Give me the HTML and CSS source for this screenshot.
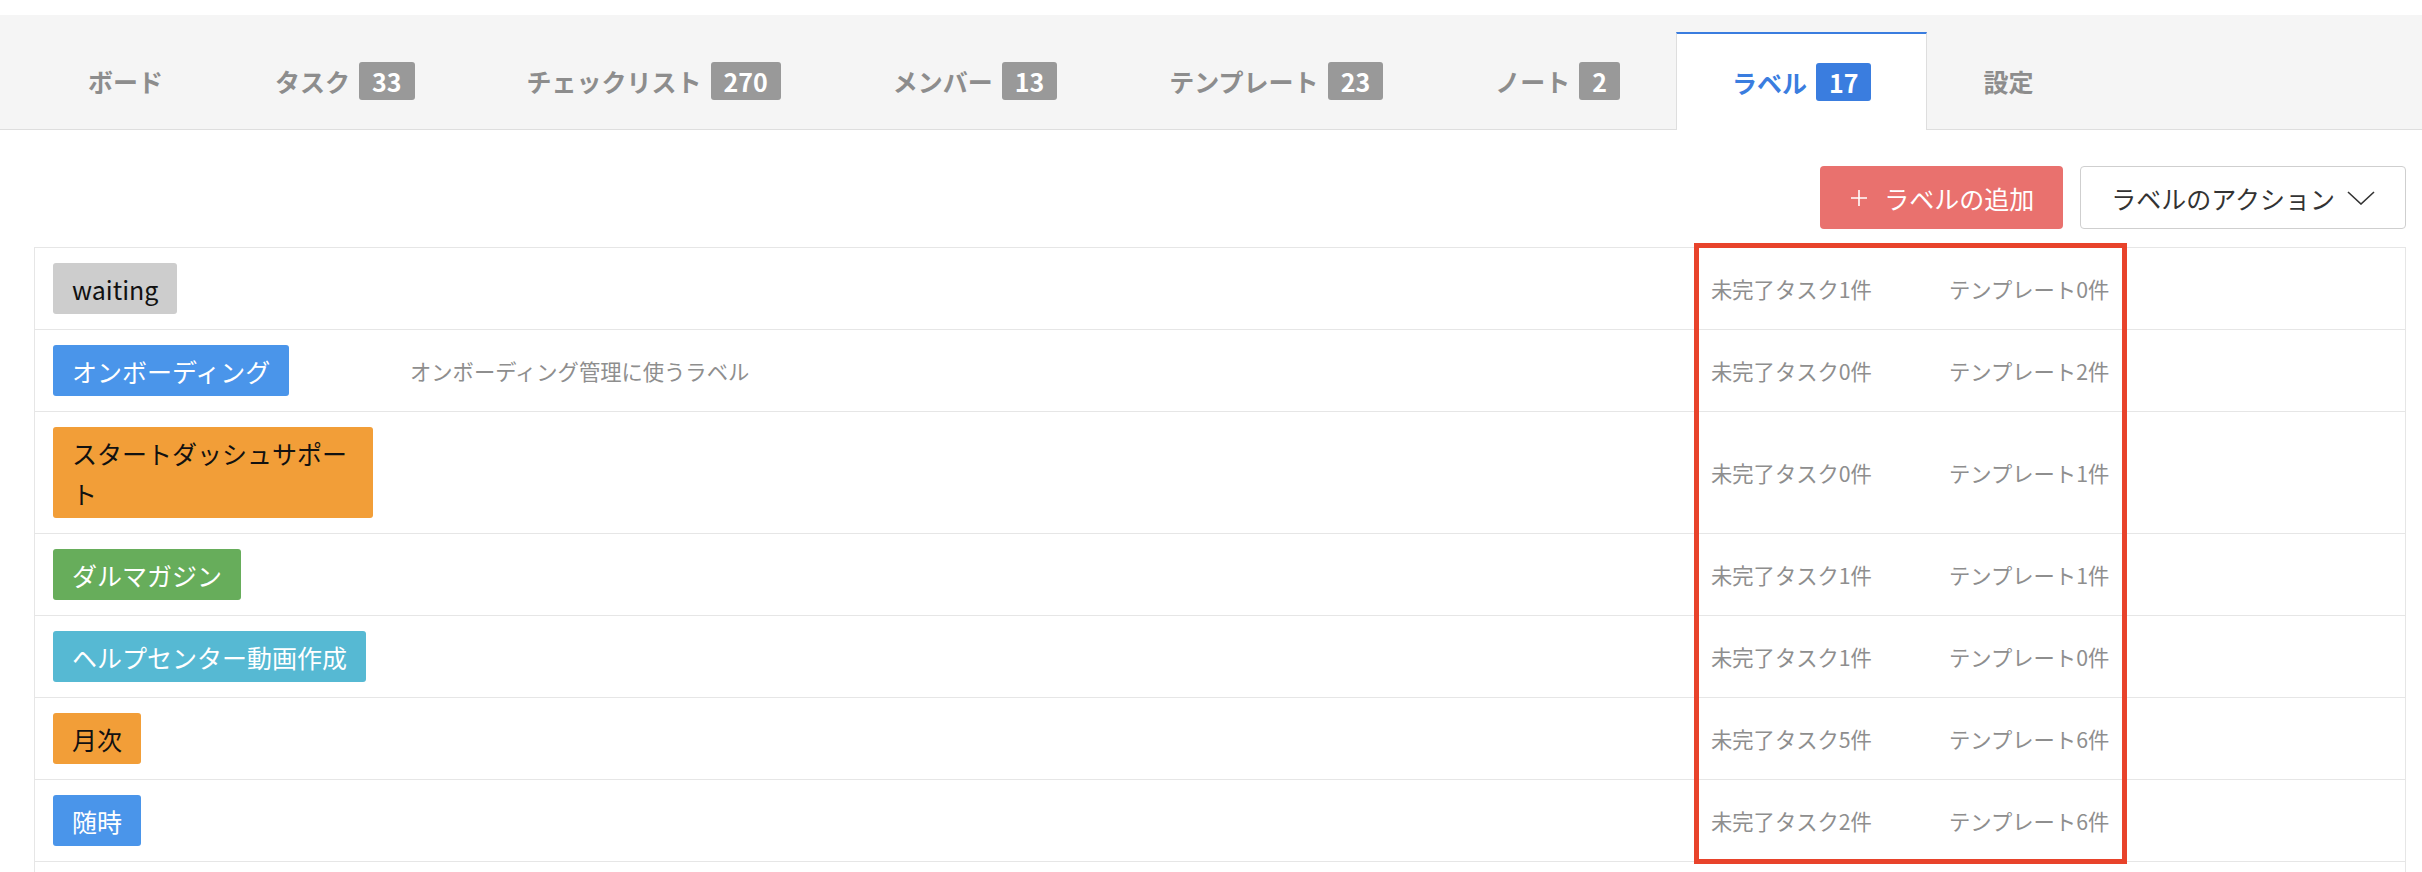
FILE: index.html
```html
<!DOCTYPE html>
<html lang="ja">
<head>
  <meta charset="UTF-8">
  <title>ラベル</title>
  <link rel="stylesheet" href="styles.css">
</head>
<body>
  <nav class="tabs">
    <div class="tab">ボード</div>
    <div class="tab">タスク<span class="count">33</span></div>
    <div class="tab">チェックリスト<span class="count">270</span></div>
    <div class="tab">メンバー<span class="count">13</span></div>
    <div class="tab">テンプレート<span class="count">23</span></div>
    <div class="tab">ノート<span class="count">2</span></div>
    <div class="tab active">ラベル<span class="count">17</span></div>
    <div class="tab">設定</div>
  </nav>

  <div class="content">
    <div class="toolbar">
      <button class="btn btn-add">
        <svg class="plus" width="16" height="16" viewBox="0 0 16 16"><path d="M8 0v16M0 8h16" stroke="#fff" stroke-width="1.6" fill="none"/></svg>
        ラベルの追加
      </button>
      <button class="btn btn-actions">
        ラベルのアクション
        <svg class="chevron" width="28" height="14" viewBox="0 0 28 14"><polyline points="1,1 14,13 27,1" stroke="#333" stroke-width="1.6" fill="none"/></svg>
      </button>
    </div>

    <div class="label-table">
      <div class="row">
        <div class="cell"><span class="label gray">waiting</span></div>
        <div class="cell desc"></div>
        <div class="cell stat">未完了タスク1件</div>
        <div class="cell stat">テンプレート0件</div>
        <div class="cell"></div>
      </div>
      <div class="row">
        <div class="cell"><span class="label blue">オンボーディング</span></div>
        <div class="cell desc">オンボーディング管理に使うラベル</div>
        <div class="cell stat">未完了タスク0件</div>
        <div class="cell stat">テンプレート2件</div>
        <div class="cell"></div>
      </div>
      <div class="row">
        <div class="cell"><span class="label orange">スタートダッシュサポート</span></div>
        <div class="cell desc"></div>
        <div class="cell stat">未完了タスク0件</div>
        <div class="cell stat">テンプレート1件</div>
        <div class="cell"></div>
      </div>
      <div class="row">
        <div class="cell"><span class="label green">ダルマガジン</span></div>
        <div class="cell desc"></div>
        <div class="cell stat">未完了タスク1件</div>
        <div class="cell stat">テンプレート1件</div>
        <div class="cell"></div>
      </div>
      <div class="row">
        <div class="cell"><span class="label cyan">ヘルプセンター動画作成</span></div>
        <div class="cell desc"></div>
        <div class="cell stat">未完了タスク1件</div>
        <div class="cell stat">テンプレート0件</div>
        <div class="cell"></div>
      </div>
      <div class="row">
        <div class="cell"><span class="label orange">月次</span></div>
        <div class="cell desc"></div>
        <div class="cell stat">未完了タスク5件</div>
        <div class="cell stat">テンプレート6件</div>
        <div class="cell"></div>
      </div>
      <div class="row">
        <div class="cell"><span class="label blue">随時</span></div>
        <div class="cell desc"></div>
        <div class="cell stat">未完了タスク2件</div>
        <div class="cell stat">テンプレート6件</div>
        <div class="cell"></div>
      </div>
      <div class="row empty"></div>

      <div class="highlight"></div>
    </div>
  </div>
</body>
</html>
```

FILE: styles.css
```css
* {
  box-sizing: border-box;
}

body {
  margin: 0;
  padding-top: 15px;
  font-family: "Noto Sans CJK JP", "Noto Sans", sans-serif;
  font-size: 25px;
  color: #333;
  background: #fff;
}

.tabs {
  display: flex;
  background: #f5f5f5;
  padding: 17px 0 0 32px;
  border-bottom: 1px solid #dedede;
}

.tab {
  display: flex;
  align-items: center;
  height: 97px;
  padding: 0 56px;
  font-weight: bold;
  color: #8d8d8d;
  white-space: nowrap;
}

.tab.active {
  height: 98px;
  margin-bottom: -1px;
  padding: 0 55px;
  background: #fff;
  color: #3a7ddf;
  border: 1px solid #dedede;
  border-top: 2px solid #3a7ddf;
  border-bottom: none;
}

.count {
  display: inline-block;
  margin-left: 9px;
  padding: 0 13px;
  height: 38px;
  line-height: 38px;
  border-radius: 3px;
  background: #999;
  color: #fff;
  font-size: 25px;
}

.tab.active .count {
  background: #3a7ddf;
}

.content {
  padding: 0 16px 0 34px;
}

.toolbar {
  display: flex;
  justify-content: flex-end;
  gap: 17px;
  padding: 36px 0 18px;
}

.btn {
  display: flex;
  align-items: center;
  height: 63px;
  border-radius: 4px;
  font-family: inherit;
  font-size: 25px;
  cursor: pointer;
}

.btn-add {
  padding: 0 29px 0 31px;
  background: #e9716e;
  color: #fff;
  border: none;
}

.plus {
  margin-right: 17px;
}

.btn-actions {
  padding: 0 30px;
  background: #fff;
  color: #333;
  border: 1px solid #cfcfcf;
}

.chevron {
  margin-left: 12px;
}

.label-table {
  position: relative;
  border: 1px solid #e6e6e6;
  border-bottom: none;
}

.row {
  display: grid;
  grid-template-columns: 357px 1fr 238px 197px 277px;
  align-items: center;
  border-bottom: 1px solid #e6e6e6;
}

.row.empty {
  height: 82px;
}

.cell {
  padding: 15px 18px;
}

.label {
  display: inline-block;
  max-width: 320px;
  padding: 5.5px 19px;
  line-height: 40px;
  border-radius: 3px;
  color: #fff;
}

.label.gray { background: #cdcdcd; color: #111; }
.label.blue { background: #4a95ea; }
.label.orange { background: #f29e38; color: #111; }
.label.green { background: #67ad5b; }
.label.cyan { background: #56b9d3; }

.desc,
.stat {
  font-size: 21.3px;
  color: #8e8e8e;
  white-space: nowrap;
}

.highlight {
  position: absolute;
  left: 1659px;
  top: -5px;
  width: 433px;
  height: 621px;
  border: 5px solid #e8432b;
  pointer-events: none;
}
```
